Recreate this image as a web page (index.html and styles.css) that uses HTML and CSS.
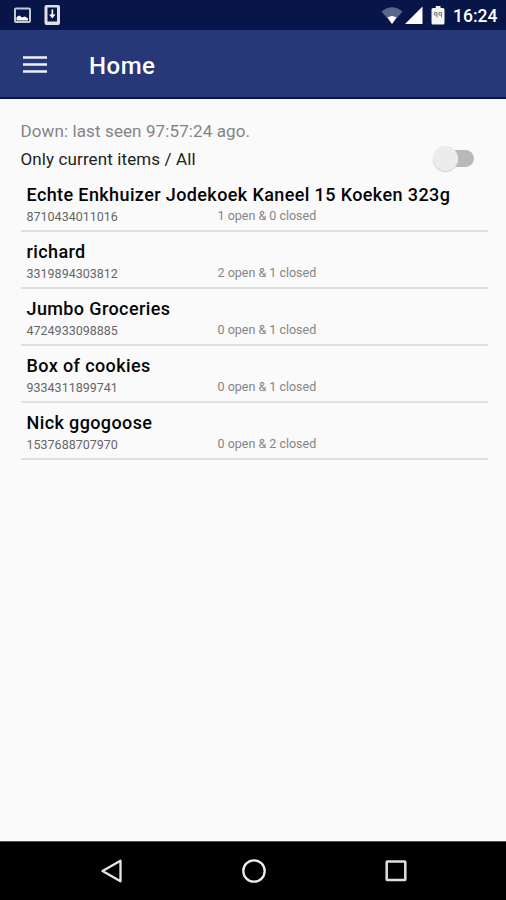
FILE: index.html
```html
<!DOCTYPE html>
<html lang="en">
<head>
<meta charset="utf-8">
<title>Home</title>
<link rel="stylesheet" href="styles.css">
</head>
<body>
<div class="screen">
  <div class="status">
    <svg class="notices" width="64" height="30" viewBox="0 0 64 30">
      <rect x="15" y="8.500" width="15" height="13.500" rx="1" fill="none" stroke="#c5c8d2" stroke-width="2"/>
      <path d="M16.500 20.500v-3.500l3-1.500 2.500 2 3-1 3 2v2z" fill="#fff"/>
      <path d="M46.500 5h11.500q2 0 2 2v16q0 2-2 2H46.500q-2 0-2-2V7q0-2 2-2z" fill="#e0dfe2"/>
      <path d="M47.500 7.500h9.500v14h-9.500z" fill="#071548"/>
      <path d="M51.500 9.500h1.700v5h2.300l-3.200 4-3.200-4h2.400z" fill="#fff"/>
    </svg>
    <svg class="signals" width="70" height="30" viewBox="380 0 70 30">
      <path d="M381.500 11.500Q392 3 402.500 11.500L392 24z" fill="#59658b"/>
      <path d="M387.500 17.500Q392 14.500 396.500 17.500L392 24z" fill="#fff"/>
      <path d="M405 24L422.500 6.500V24z" fill="#fff"/>
      <path d="M435.500 6h5v2h2.500q1.500 0 1.500 1.500V23q0 1.500-1.500 1.500h-10q-1.500 0-1.500-1.500V9.500q0-1.500 1.500-1.500h3z" fill="#f4f4f4"/>
      <path d="M434.500 12.500h2.500v5M434.500 12.500v2.500h2.500M439 12.500h2.500v5M439 12.500v2.500h2.500" fill="none" stroke="#777983"/>
    </svg>
    <span class="clock">16:24</span>
  </div>
  <header class="toolbar">
    <svg class="menu" width="24" height="20" viewBox="0 0 24 20">
      <path d="M0 2.500h24M0 9.500h24M0 16.500h24" stroke="#eef0fa" stroke-width="2.700"/>
    </svg>
    <h1>Home</h1>
  </header>
  <main>
    <p class="seen">Down: last seen 97:57:24 ago.</p>
    <div class="filter">
      <span>Only current items / All</span>
      <div class="switch"><i class="thumb"></i></div>
    </div>
    <ul>
      <li><h2>Echte Enkhuizer Jodekoek Kaneel 15 Koeken 323g</h2><div class="meta"><span class="code">8710434011016</span><span class="count">1 open &amp; 0 closed</span></div></li>
      <li><h2>richard</h2><div class="meta"><span class="code">3319894303812</span><span class="count">2 open &amp; 1 closed</span></div></li>
      <li><h2>Jumbo Groceries</h2><div class="meta"><span class="code">4724933098885</span><span class="count">0 open &amp; 1 closed</span></div></li>
      <li><h2>Box of cookies</h2><div class="meta"><span class="code">9334311899741</span><span class="count">0 open &amp; 1 closed</span></div></li>
      <li><h2>Nick ggogoose</h2><div class="meta"><span class="code">1537688707970</span><span class="count">0 open &amp; 2 closed</span></div></li>
    </ul>
  </main>
  <nav>
    <svg width="24" height="26" viewBox="0 0 24 26"><path d="M2.500 13L20.500 2.700v20.600z" fill="none" stroke="#e6e6e6" stroke-width="2.300" stroke-linejoin="round"/></svg>
    <svg width="26" height="26" viewBox="0 0 26 26"><circle cx="13" cy="13" r="10.700" fill="none" stroke="#ececec" stroke-width="2.300"/></svg>
    <svg width="24" height="26" viewBox="0 0 24 26"><rect x="2.700" y="3.500" width="18.600" height="18.600" rx=".5" fill="none" stroke="#e0e0e0" stroke-width="2.500"/></svg>
  </nav>
</div>
</body>
</html>
```
FILE: styles.css
```css
* { box-sizing: border-box; margin: 0; padding: 0; }
body { font-family: Roboto, sans-serif; background: #fafafa; }
.screen { width: 506px; height: 900px; display: flex; flex-direction: column; overflow: hidden; }
.status { height: 30px; background: #071548; display: flex; align-items: center; }
.status svg, nav svg { display: block; flex: none; }
.signals { margin-left: 316px; }
.clock { margin-left: 3px; padding-top: 2px; color: #fff; font-size: 17.500px; line-height: 28px; font-weight: 500; }
.toolbar { height: 69px; background: #263878; border-bottom: 2px solid #07125c; display: flex; align-items: center; padding-left: 23px; }
.menu { display: block; flex: none; margin-top: 3px; }
h1 { margin-left: 42px; padding-top: 5px; color: #fff; font-size: 24px; line-height: 30px; font-weight: 500; letter-spacing: .5px; }
main { flex: 1; background: #fafafa; padding: 20px 18px 0 20.500px; }
.seen { height: 25px; line-height: 25px; font-size: 17px; letter-spacing: .11px; color: #848484; }
.filter { height: 31px; line-height: 31px; font-size: 17px; letter-spacing: .11px; color: #222; display: flex; align-items: center; justify-content: space-between; }
.switch { width: 34px; height: 17px; margin: -2px 14px 0 0; border-radius: 9px; background: #b9b9b9; display: flex; align-items: center; }
.thumb { display: block; flex: none; width: 25px; height: 25px; margin-left: -7px; border-radius: 50%; background: #ececec; box-shadow: 0 1px 1px #ccc; }
ul { list-style: none; }
li { height: 57px; border-bottom: 2px solid #e0e0e0; padding: 8px 0 0 6px; }
h2 { font-size: 18px; line-height: 24px; font-weight: 500; letter-spacing: .39px; color: #050505; white-space: nowrap; }
.meta { display: flex; line-height: 18px; font-size: 12.500px; padding-top: 1px; }
.code { width: 191px; color: #666; }
.count { color: #858585; margin-top: -1px; }
nav { height: 59px; background: #000; border-top: 1px solid #555; display: flex; justify-content: space-between; align-items: center; padding: 0 98px 0 100px; }
```
